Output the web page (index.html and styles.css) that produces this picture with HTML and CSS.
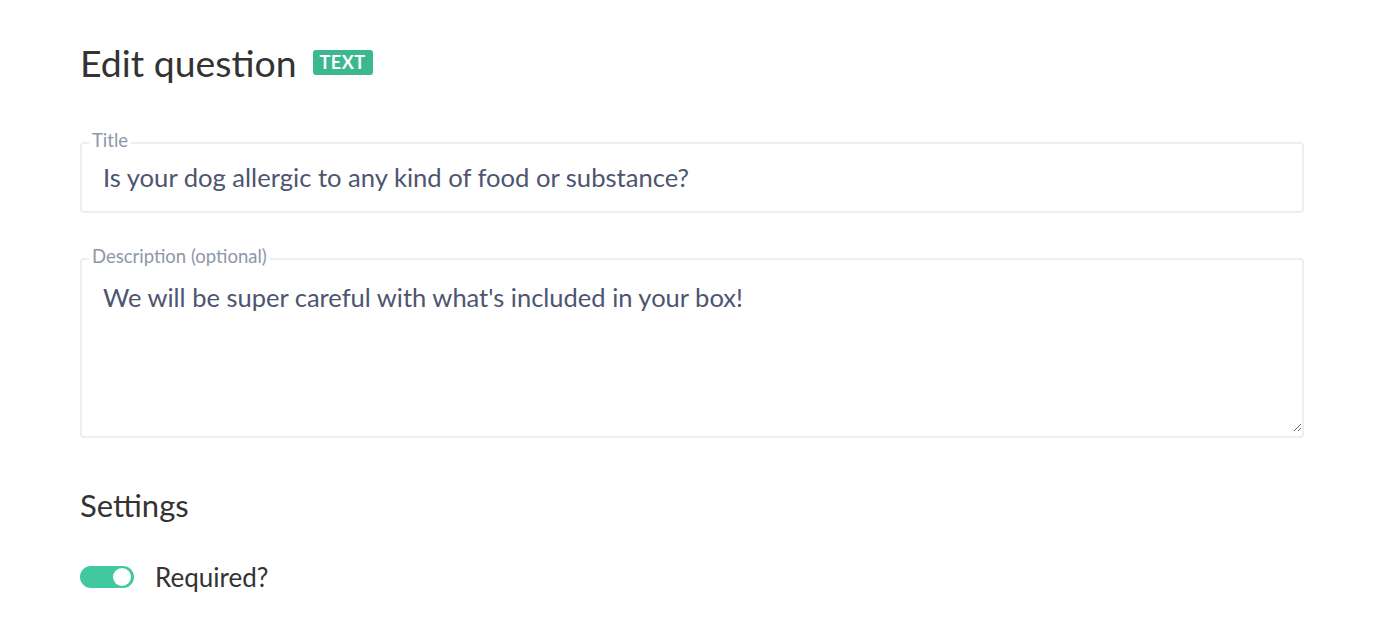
FILE: index.html
```html
<!DOCTYPE html>
<html>
<head>
<meta charset="utf-8">
<link rel="stylesheet" href="styles.css">
</head>
<body>
<main class="page">
  <div class="header">
    <h1 class="title">Edit question</h1>
    <span class="badge">TEXT</span>
  </div>
  <fieldset class="field field-title">
    <legend class="legend">Title</legend>
    <input class="input" type="text" value="Is your dog allergic to any kind of food or substance?">
  </fieldset>
  <fieldset class="field field-desc">
    <legend class="legend">Description (optional)</legend>
    <textarea class="textarea">We will be super careful with what's included in your box!</textarea>
  </fieldset>
  <h2 class="settings">Settings</h2>
  <label class="toggle-row">
    <span class="toggle"><span class="knob"></span></span>
    <span class="toggle-label">Required?</span>
  </label>
</main>
</body>
</html>
```
FILE: styles.css
```css
* { box-sizing: border-box; }
html, body { margin: 0; padding: 0; background: #fff; }
body { font-family: Lato, "Open Sans", sans-serif; color: #333; }
.page { width: 1224px; margin-left: 80px; padding-top: 38px; }
.header { display: flex; align-items: center; gap: 16px; height: 50px; }
.title { margin: 0; font-size: 37.4px; font-weight: 400; color: #333; line-height: 50px; }
.badge { background: #3bb88f; color: #fff; font-size: 18px; font-weight: 700; padding: 0 7px; height: 25px; line-height: 25px; border-radius: 3px; letter-spacing: 0.5px; margin-top: -2px; }
.field { margin: 0; padding: 0; border: 2px solid #eceef2; border-radius: 4px; overflow: hidden; }
.field-title { margin-top: 42px; height: 83px; }
.legend { margin-left: 7px; padding: 0 3px 6px; font-size: 18.5px; color: #8e97aa; line-height: 20px; }
.input { display: block; width: 100%; height: 64px; border: 0; outline: 0; padding: 0 0 0 21px; font-family: inherit; font-size: 25.6px; color: #4d5570; background: transparent; margin-top: -11px; }
.field-desc { margin-top: 33px; height: 192px; }
.textarea { display: block; width: 100%; height: 170px; border: 0; outline: 0; padding: 19px 21px; font-family: inherit; font-size: 25.5px; color: #4d5570; background: transparent; resize: vertical; margin-top: -10px; line-height: 32px; }
.settings { margin: 47px 0 0; font-size: 31px; font-weight: 400; color: #333; line-height: 40px; }
.toggle-row { display: flex; align-items: center; gap: 21px; margin-top: 37px; }
.toggle { width: 54px; height: 22px; border-radius: 11px; background: #42c89e; position: relative; display: block; }
.knob { position: absolute; right: 3px; top: 2px; width: 18px; height: 18px; border-radius: 50%; background: #fff; }
.toggle-label { font-size: 26px; color: #333; line-height: 30px; }
```
